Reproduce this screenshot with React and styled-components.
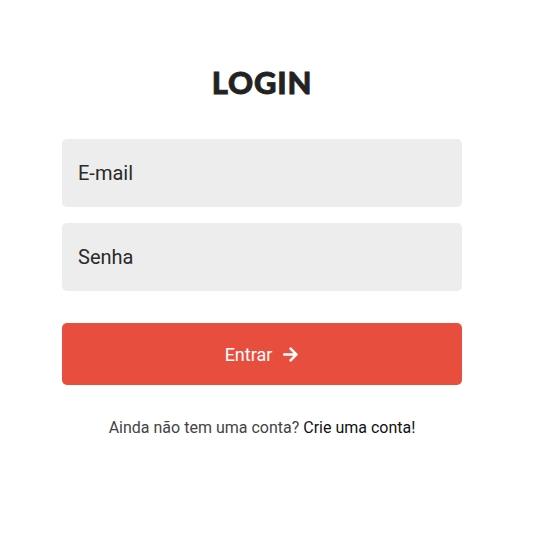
import styled, { createGlobalStyle } from "styled-components";
import { FaArrowRight } from "react-icons/fa";

const GlobalStyle = createGlobalStyle`
  body {
    margin: 0;
    background: #ffffff;
    font-family: Roboto, "Liberation Sans", sans-serif;
  }
`;

const Page = styled.div`
  width: 543px;
  height: 537px;
  background: #ffffff;
`;

const Form = styled.form`
  width: 400px;
  margin-left: 62px;
  padding-top: 62px;
  display: flex;
  flex-direction: column;
  align-items: center;
`;

const Title = styled.h1`
  margin: 0 0 36px;
  font-family: Lato, "DejaVu Sans", sans-serif;
  font-weight: 900;
  font-size: 31px;
  line-height: 41px;
  letter-spacing: 0.8px;
  color: #222222;
  -webkit-text-stroke: 0.8px #222222;
`;

const Input = styled.input`
  box-sizing: border-box;
  width: 100%;
  height: 68px;
  margin-bottom: 16px;
  padding: 0 16px;
  border: none;
  border-radius: 5px;
  background: #ededed;
  font-family: Roboto, "Liberation Sans", sans-serif;
  font-size: 20px;
  color: #222222;
  outline: none;

  &::placeholder {
    color: #2a2a2a;
  }
`;

const Button = styled.button`
  box-sizing: border-box;
  width: 100%;
  height: 62px;
  margin-top: 16px;
  border: none;
  border-radius: 5px;
  background: #e84e3e;
  color: #ffffff;
  font-family: Roboto, "Liberation Sans", sans-serif;
  font-size: 18px;
  display: flex;
  align-items: center;
  justify-content: center;
  gap: 10px;
  cursor: pointer;
`;

const Footer = styled.p`
  margin: 33px 0 0;
  font-size: 16px;
  color: #444444;
`;

const Link = styled.a`
  color: #111111;
  text-decoration: none;
`;

const App = () => {
  return (
    <Page>
      <GlobalStyle />
      <Form onSubmit={(e) => e.preventDefault()}>
        <Title>LOGIN</Title>
        <Input type="email" placeholder="E-mail" />
        <Input type="password" placeholder="Senha" />
        <Button type="submit">
          Entrar
          <FaArrowRight size={17} />
        </Button>
        <Footer>
          Ainda não tem uma conta? <Link href="#">Crie uma conta!</Link>
        </Footer>
      </Form>
    </Page>
  );
};

export default App;
